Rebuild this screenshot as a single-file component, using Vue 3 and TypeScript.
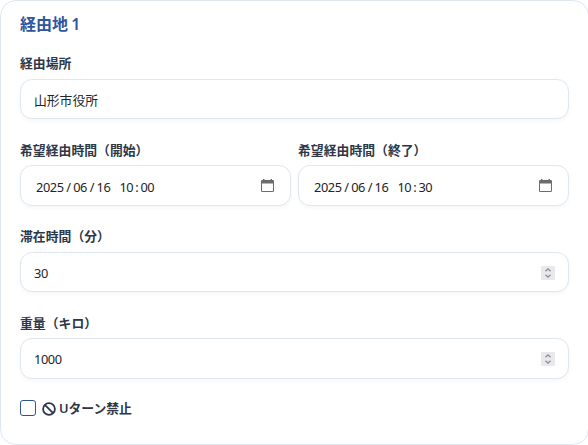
<script setup lang="ts">
import { ref } from 'vue'

interface DateField {
  label: string
  parts: { kind: string; text: string }[]
}

function split(value: string): { kind: string; text: string }[] {
  const kinds: Record<string, string> = { '/': 'slash', ':': 'colon', ' ': 'space' }
  return (value.match(/\d+|\D/g) ?? []).map((text) => ({ kind: kinds[text] ?? 'digits', text }))
}

const place = ref('山形市役所')
const dates = ref<DateField[]>([
  { label: '希望経由時間（開始）', parts: split('2025/06/16 10:00') },
  { label: '希望経由時間（終了）', parts: split('2025/06/16 10:30') },
])
const numbers = ref([
  { label: '滞在時間（分）', value: '30' },
  { label: '重量（キロ）', value: '1000' },
])
const noUturn = ref(false)
</script>

<template>
  <section class="card">
    <h3 class="title">経由地 1</h3>

    <div class="field">
      <div class="label">経由場所</div>
      <div class="control">{{ place }}</div>
    </div>

    <div class="row">
      <div v-for="d in dates" :key="d.label" class="field">
        <div class="label">{{ d.label }}</div>
        <div class="control numeric">
          <div class="segments num">
            <span v-for="(p, i) in d.parts" :key="i" :class="p.kind">{{ p.text }}</span>
          </div>
          <svg class="calendar" width="13" height="13" viewBox="0 0 13 13">
            <path fill="#6c6c6c" fill-rule="evenodd" d="M2 0h1.5v1h6V0H11v1h.8A1.2 1.2 0 0 1 13 2.2v9.5a1.3 1.3 0 0 1-1.3 1.3H1.3A1.3 1.3 0 0 1 0 11.7V2.2A1.2 1.2 0 0 1 1.2 1H2zM1 4.5V12h11V4.5z" />
          </svg>
        </div>
      </div>
    </div>

    <div v-for="n in numbers" :key="n.label" class="field">
      <div class="label">{{ n.label }}</div>
      <div class="control numeric">
        <span class="num">{{ n.value }}</span>
        <svg class="spinner" width="14" height="14" viewBox="0 0 14 14">
          <rect width="14" height="14" fill="#e9e9ed" />
          <path d="M4.5 5.2 7 2.8 9.5 5.2M4.5 8.8 7 11.2 9.5 8.8" fill="none" stroke="#8c8c91" stroke-width="1.3" />
        </svg>
      </div>
    </div>

    <label class="check">
      <input v-model="noUturn" type="checkbox" class="box" />
      <svg class="ban" width="14" height="14" viewBox="0 0 14 14">
        <circle cx="7" cy="7" r="5.9" fill="none" stroke="#2d3748" stroke-width="1.8" />
        <path d="M2.8 2.8 11.2 11.2" stroke="#2d3748" stroke-width="1.8" />
      </svg>
      <span>Uターン禁止</span>
    </label>
  </section>
</template>

<style>
body {
  background: #fff;
}
</style>

<style scoped>
.card {
  box-sizing: border-box;
  width: 589px;
  height: 445px;
  padding: 12px 19px 0;
  border: 1px solid #dfe7f1;
  border-radius: 16px;
  background: #fff;
  color: #2d3748;
  font-family: "Noto Sans", "Noto Sans CJK JP", sans-serif;
  font-size: 12.8px;
}
.title {
  margin: 0 0 19.4px;
  color: #2f569f;
  font-size: 16px;
  line-height: 22px;
  font-weight: 600;
  word-spacing: -1px;
}
.field {
  flex: 1;
  margin-bottom: 21.4px;
}
.label {
  height: 18px;
  margin-bottom: 6.6px;
  line-height: 18px;
  font-weight: 600;
  letter-spacing: 0.05px;
  white-space: nowrap;
}
.row {
  display: flex;
  gap: 7px;
}
.control {
  box-sizing: border-box;
  display: flex;
  align-items: center;
  justify-content: space-between;
  height: 40.4px;
  padding: 1px 13px 0;
  border: 1px solid #dfe7f1;
  border-radius: 12px;
  background: #fff;
  box-shadow: 0 2px 4px rgba(0, 0, 0, 0.04);
  color: #212529;
  line-height: 18px;
}
.numeric {
  padding-top: 2px;
}
.num {
  letter-spacing: -0.42px;
}
.segments {
  display: flex;
  padding-left: 2px;
}
.slash,
.colon {
  width: 9.6px;
  text-align: center;
}
.colon {
  width: 7.2px;
}
.space {
  width: 9px;
}
.calendar {
  margin: 0 3.4px 2px 0;
}
.check {
  display: flex;
  align-items: center;
  height: 16px;
  font-weight: 600;
}
.box {
  appearance: none;
  box-sizing: border-box;
  width: 16px;
  height: 16px;
  margin: 0 6px 0 0;
  border: 1px solid #2c5299;
  border-radius: 3px;
  background: #fff;
}
.ban {
  margin: 2px 3px 0 0;
}
</style>
